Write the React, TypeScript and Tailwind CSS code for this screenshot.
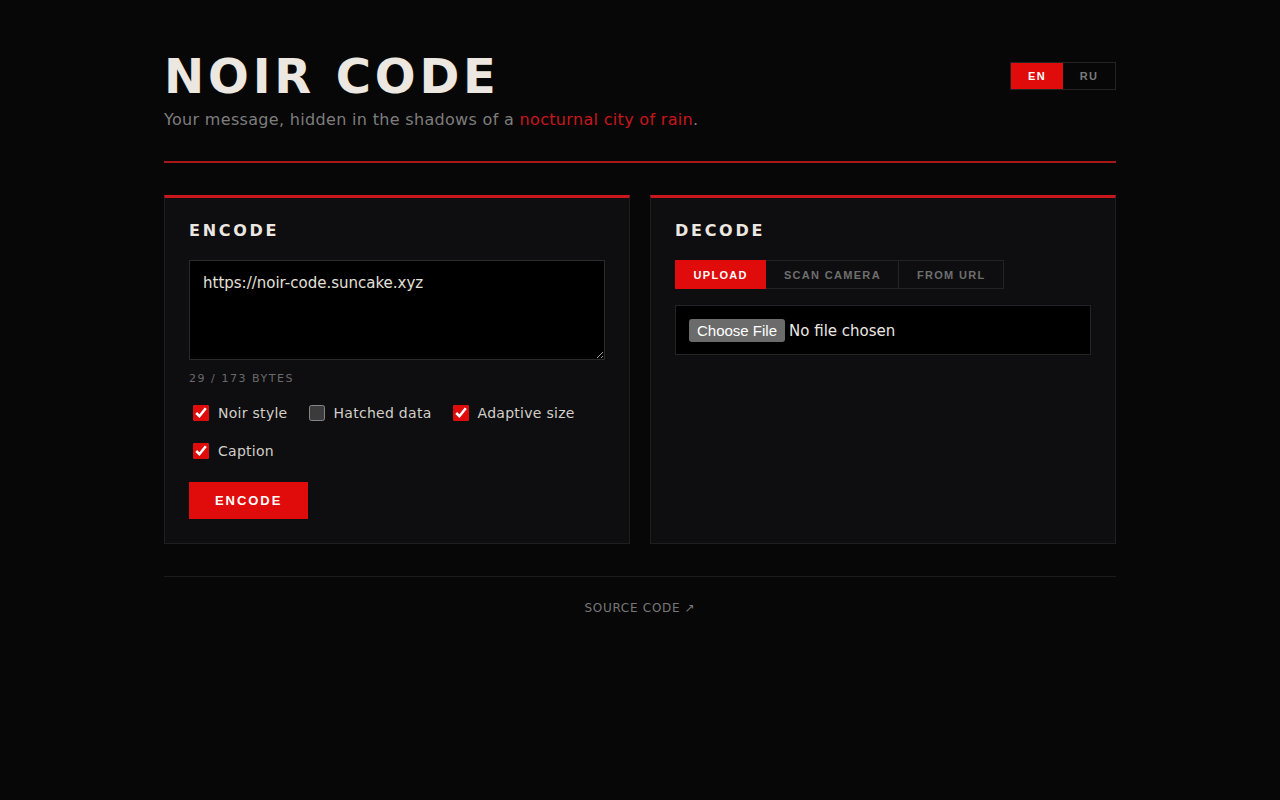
import React, { useState } from "react";

const sans = "font-['DejaVu_Sans',sans-serif]";
const arial = "font-['Liberation_Sans',Arial,sans-serif]";

export default function App() {
  const [text, setText] = useState("https://noir-code.suncake.xyz");
  const [lang, setLang] = useState("en");
  const [tab, setTab] = useState("upload");
  const [opts, setOpts] = useState({ noir: true, hatched: false, adaptive: true, caption: true });

  const options: { key: keyof typeof opts; label: string }[] = [
    { key: "noir", label: "Noir style" },
    { key: "hatched", label: "Hatched data" },
    { key: "adaptive", label: "Adaptive size" },
    { key: "caption", label: "Caption" },
  ];

  const tabs = [
    { id: "upload", label: "UPLOAD" },
    { id: "camera", label: "SCAN CAMERA" },
    { id: "url", label: "FROM URL" },
  ];

  return (
    <div className={`min-h-screen bg-[#070707] [color-scheme:dark] ${sans}`}>
      <div className="mx-auto w-[952px] pt-[48px]">
        {/* Header */}
        <header className="flex items-start justify-between pb-[29px] border-b-2 border-[#a8161a]">
          <div>
            <h1 className="text-[48px] leading-[56px] font-bold tracking-[0.08em] text-[#ece7e0]">NOIR CODE</h1>
            <p className="mt-[4px] text-[16px] leading-[24px] tracking-[0.02em] text-[#7d7d7d]">
              Your message, hidden in the shadows of a <span className="text-[#c8161c]">nocturnal city of rain</span>.
            </p>
          </div>
          <div className={`mt-[14px] flex border border-[#232325] ${arial}`}>
            {["en", "ru"].map((l) => (
              <button
                key={l}
                onClick={() => setLang(l)}
                className={`w-[52px] h-[26px] text-[11px] font-bold tracking-[0.12em] ${
                  lang === l ? "bg-[#e00b0b] text-white" : "text-[#7a7a7a]"
                }`}
              >
                {l.toUpperCase()}
              </button>
            ))}
          </div>
        </header>

        {/* Panels */}
        <div className="mt-[32px] grid grid-cols-2 gap-[20px]">
          <section className="bg-[#0e0e10] border border-[#1f1f22] border-t-[3px] border-t-[#c8161c] pt-[23px] px-6 pb-6">
            <h2 className="text-[16px] leading-[20px] font-bold tracking-[0.17em] text-[#ece7e0]">ENCODE</h2>
            <textarea
              value={text}
              onChange={(e) => setText(e.target.value)}
              className="mt-[19px] block w-full h-[100px] bg-black border border-[#2a2a2c] px-[13px] py-[11px] text-[15px] leading-[22px] text-[#e4e0da] outline-none"
            />
            <div className="mt-[11px] text-[11px] leading-[16px] tracking-[0.14em] text-[#6a6a6a]">
              {new TextEncoder().encode(text).length} / 173 BYTES
            </div>
            <div className="mt-[14px] flex flex-wrap gap-x-[17px] gap-y-[14px]">
              {options.map((o) => (
                <label key={o.key} className="flex h-[24px] items-center gap-[6px] text-[14px] tracking-[0.02em] text-[#d2cec8] cursor-pointer">
                  <input
                    type="checkbox"
                    checked={opts[o.key]}
                    onChange={() => setOpts({ ...opts, [o.key]: !opts[o.key] })}
                    className="w-4 h-4 ml-1 mr-[3px] accent-[#e00b0b]"
                  />
                  {o.label}
                </label>
              ))}
            </div>
            <button className={`mt-[19px] h-[37px] px-[26px] bg-[#e00b0b] text-white text-[13px] font-bold tracking-[0.15em] ${arial}`}>
              ENCODE
            </button>
          </section>

          <section className="bg-[#0e0e10] border border-[#1f1f22] border-t-[3px] border-t-[#c8161c] pt-[23px] px-6 pb-6">
            <h2 className="text-[16px] leading-[20px] font-bold tracking-[0.17em] text-[#ece7e0]">DECODE</h2>
            <div className={`mt-[19px] flex ${arial}`}>
              {tabs.map((t) => (
                <button
                  key={t.id}
                  onClick={() => setTab(t.id)}
                  className={`h-[29px] pt-px px-[17.5px] text-[11px] font-bold tracking-[0.12em] border-y border-r border-[#232325] first:border-l ${
                    tab === t.id ? "bg-[#e00b0b] border-[#e00b0b] text-white" : "text-[#6e6e6e]"
                  }`}
                >
                  {t.label}
                </button>
              ))}
            </div>
            <div className="mt-[16px] bg-black border border-[#242426] px-[13px] h-[50px] flex items-center">
              <input
                type="file"
                className={`mt-[2px] text-[15px] text-[#ece7e0] ${sans} file:font-['Liberation_Sans',Arial,sans-serif] file:bg-[#6b6b6b] file:text-white file:border-0 file:rounded-[3px] file:px-[8px] file:py-[2px] file:leading-[19px] file:mr-[4px] file:text-[15px]`}
              />
            </div>
          </section>
        </div>

        {/* Footer */}
        <footer className="mt-[32px] border-t border-[#1c1c1e] pt-[18px] text-center">
          <a className="text-[12px] leading-[16px] tracking-[0.06em] text-[#777]" href="#">SOURCE CODE ↗</a>
        </footer>
      </div>
    </div>
  );
}
